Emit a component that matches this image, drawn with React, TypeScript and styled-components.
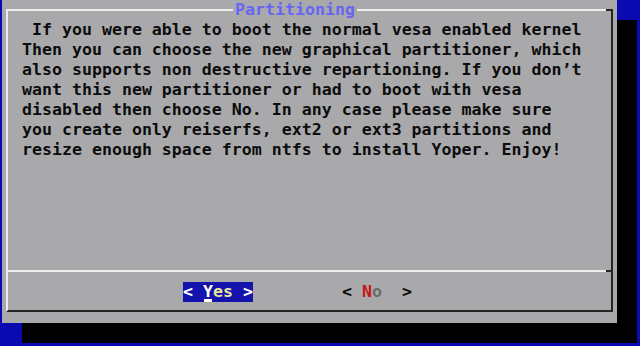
import React from "react";
import styled, { createGlobalStyle } from "styled-components";

const Global = createGlobalStyle`
  html, body { margin: 0; padding: 0; background: #0a0ab0; }
  body { font-family: "DejaVu Sans Mono", "Liberation Mono", monospace; }
`;

const Screen = styled.div`
  width: 640px;
  height: 346px;
  overflow: hidden;
  background: #0a0ab0;
  padding-left: 2px;
  box-sizing: border-box;
`;

const Dialog = styled.div`
  width: 615px;
  height: 323px;
  background: #a9a9ab;
  box-shadow: 20px 20px 0 #000;
  padding: 9px 4px 11px 4px;
  box-sizing: border-box;
  font-family: "DejaVu Sans Mono", "Liberation Mono", monospace;
  font-weight: bold;
  font-size: 16.6px;
  line-height: 20px;
  color: #0c0c0c;
`;

const Frame = styled.div`
  position: relative;
  height: 100%;
  box-sizing: border-box;
  border: 2px solid;
  border-color: #ececec #262626 #262626 #ececec;
  display: flex;
  flex-direction: column;
  &::after {
    content: "";
    position: absolute;
    top: -2px;
    right: -2px;
    width: 7px;
    height: 2px;
    background: #262626;
  }
`;

const Title = styled.div`
  margin: -11px 0 0 225px;
  padding: 0 2px;
  width: fit-content;
  height: 20px;
  background: #a9a9ab;
  color: #6666f2;
  white-space: pre;
`;

const Body = styled.div`
  flex: 1;
  padding-left: 14px;
  white-space: pre;
`;

const Separator = styled.div`
  display: flex;
  height: 2px;
`;

const SepLine = styled.div<{ $dark?: boolean }>`
  flex: ${(p) => (p.$dark ? "0 0 5px" : "1")};
  background: ${(p) => (p.$dark ? "#262626" : "#ececec")};
`;

const ButtonRow = styled.div`
  height: 38px;
  box-sizing: border-box;
  padding: 10px 0 0 175px;
  display: flex;
  gap: 89px;
  white-space: pre;
`;

const Button = styled.div<{ $active?: boolean }>`
  width: 70px;
  height: 20px;
  display: flex;
  background: ${(p) => (p.$active ? "#1414ac" : "transparent")};
  color: ${(p) => (p.$active ? "#ffffff" : "#0c0c0c")};
`;

const Key = styled.span<{ $active?: boolean }>`
  position: relative;
  color: ${(p) => (p.$active ? "#ffffff" : "#c81414")};
  &::after {
    content: "";
    display: ${(p) => (p.$active ? "block" : "none")};
    position: absolute;
    left: 1px;
    width: 8px;
    bottom: 0px;
    height: 3px;
    background: #ffffff;
  }
`;

const Rest = styled.span<{ $active?: boolean }>`
  color: ${(p) => (p.$active ? "#e4e49a" : "#6c6c6c")};
`;

const lines = [
  " If you were able to boot the normal vesa enabled kernel",
  "Then you can choose the new graphical partitioner, which",
  "also supports non destructive repartioning. If you don\u2019t",
  "want this new partitioner or had to boot with vesa",
  "disabled then choose No. In any case please make sure",
  "you create only reiserfs, ext2 or ext3 partitions and",
  "resize enough space from ntfs to install Yoper. Enjoy!",
];

export default function App() {
  return (
    <>
      <Global />
      <Screen>
        <Dialog>
          <Frame>
            <Title>Partitioning</Title>
            <Body>{lines.join("\n")}</Body>
            <Separator>
              <SepLine />
              <SepLine $dark />
            </Separator>
            <ButtonRow>
              <Button $active>
                {"< "}
                <Key $active>Y</Key>
                <Rest $active>es</Rest>
                {" >"}
              </Button>
              <Button>
                {"< "}
                <Key>N</Key>
                <Rest>o</Rest>
                {"  >"}
              </Button>
            </ButtonRow>
          </Frame>
        </Dialog>
      </Screen>
    </>
  );
}
